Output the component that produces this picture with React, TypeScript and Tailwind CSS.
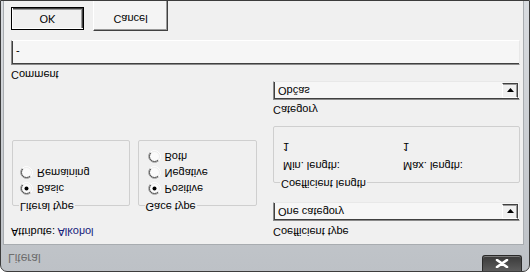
import React from "react";

function Radio({ checked }: { checked?: boolean }) {
  return (
    <svg width="13" height="13" viewBox="0 0 13 13" className="shrink-0">
      <circle cx="6.5" cy="6.5" r="5.5" fill="#fbfbfb" />
      <path d="M2.26 10.74 A6 6 0 0 1 10.74 2.26" stroke="#9a9a9a" fill="none" strokeWidth="1" />
      <path d="M10.74 2.26 A6 6 0 0 1 2.26 10.74" stroke="#ffffff" fill="none" strokeWidth="1" />
      <path d="M2.96 10.04 A5 5 0 0 1 10.04 2.96" stroke="#505050" fill="none" strokeWidth="1" />
      <path d="M10.04 2.96 A5 5 0 0 1 2.96 10.04" stroke="#ececec" fill="none" strokeWidth="1" />
      {checked && <circle cx="6.5" cy="6.5" r="2" fill="#000000" />}
    </svg>
  );
}

function RadioRow({ label, checked }: { label: string; checked?: boolean }) {
  return (
    <div className="flex items-center h-[16px] gap-[4px]">
      <Radio checked={checked} />
      <span className="leading-[13px]">{label}</span>
    </div>
  );
}

function Combo({ value }: { value: string }) {
  return (
    <div className="flex items-center justify-between h-[19px] w-[247px] bg-[#f6f6f6] border border-t-[#8a8a8a] border-l-[#8a8a8a] border-b-[#e8e8e8] border-r-[#e8e8e8] shadow-[inset_1px_1px_0_#404040] pl-[4px] pr-[1px]">
      <span className="leading-[13px]">{value}</span>
      <div className="flex items-center justify-center w-[16px] h-[15px] bg-[#f0f0f0] border border-t-white border-l-white border-b-[#404040] border-r-[#404040] shadow-[inset_-1px_-1px_0_#9a9a9a]">
        <svg width="7" height="4" viewBox="0 0 7 4">
          <path d="M0 0 H7 L3.5 4 Z" fill="#000" />
        </svg>
      </div>
    </div>
  );
}

function Group({
  label,
  className,
  children,
}: {
  label: string;
  className: string;
  children: React.ReactNode;
}) {
  return (
    <div className={`relative border border-[#cfcfcf] rounded-[2px] ${className}`}>
      <span className="absolute -top-[8px] left-[6px] bg-[#f0f0f0] px-[1px] leading-[13px]">{label}</span>
      {children}
    </div>
  );
}

export default function App() {
  return (
    <div className="w-[530px] h-[272px] overflow-hidden bg-white -scale-y-100 font-['Liberation_Sans',Arial,sans-serif] text-[11px] text-black">
      <div className="flex flex-col w-[530px] h-[272px] rounded-t-[7px] border border-[#3c3c3c] bg-gradient-to-b from-[#bdc1c6] to-[#d9dce0] overflow-hidden">
        {/* title bar */}
        <div className="flex justify-between h-[26px] shrink-0 pl-[7px] pr-[7px]">
          <span className="self-center text-[12px] leading-[14px] text-[#6e6e6e]">Literal</span>
          <div className="flex items-center justify-center w-[40px] h-[16px] rounded-b-[3px] border border-t-0 border-[#2a2a2a] bg-gradient-to-b from-[#5c5c5c] to-[#3a3a3a] shadow-[inset_0_-1px_0_#7a7a7a]">
            <svg width="14" height="9" viewBox="0 0 14 9">
              <path d="M2 1 L12 8 M12 1 L2 8" stroke="#ffffff" strokeWidth="2.6" strokeLinecap="round" />
            </svg>
          </div>
        </div>
        {/* client */}
        <div className="flex-1 ml-[2px] mr-[5px] bg-[#f0f0f0] border-t border-l border-r border-[#a8acb0] pl-[7px] pt-[6px] overflow-hidden">
          <div className="grid grid-cols-[246px_247px] gap-x-[16px]">
            <div className="flex flex-col">
              <div className="h-[13px] leading-[13px]">
                Attribute: <span className="text-[#14207a]">Alkohol</span>
              </div>
              <div className="flex gap-[8px] mt-[19px] ml-[1px]">
                <Group label="Literal type" className="w-[118px] h-[66px] pt-[8px] pl-[7px]">
                  <RadioRow label="Basic" checked />
                  <RadioRow label="Remaining" />
                </Group>
                <Group label="Gace type" className="w-[120px] h-[66px] pt-[8px] pl-[9px]">
                  <RadioRow label="Positive" checked />
                  <RadioRow label="Negative" />
                  <RadioRow label="Both" />
                </Group>
              </div>
            </div>
            <div className="flex flex-col">
              <div className="h-[13px] leading-[13px]">Coefficient type</div>
              <div className="mt-[4px]">
                <Combo value="One category" />
              </div>
              <Group label="Coefficient length" className="mt-[19px] h-[57px] pt-[10px] pl-[9px]">
                <div className="grid grid-cols-[120px_120px] gap-y-[6px] leading-[13px]">
                  <span>Min. length:</span>
                  <span>Max. length:</span>
                  <span>1</span>
                  <span>1</span>
                </div>
              </Group>
              <div className="mt-[10px] h-[13px] leading-[13px]">Category</div>
              <div className="mt-[3px]">
                <Combo value="Občas" />
              </div>
            </div>
          </div>
          <div className="h-[13px] leading-[13px]">Comment</div>
          <div className="mt-[3px] flex items-center w-[509px] h-[25px] bg-[#f6f6f6] border border-t-[#8a8a8a] border-l-[#8a8a8a] border-b-[#ffffff] border-r-[#e8e8e8] shadow-[inset_1px_1px_0_#404040] pl-[4px]">
            <span className="leading-[13px]">-</span>
          </div>
          <div className="mt-[9px] flex items-start gap-[9px]">
            <div className="mt-[1px] flex items-center justify-center w-[73px] h-[23px] border border-black bg-[#f0f0f0] shadow-[inset_1px_1px_0_#ffffff,inset_-1px_-1px_0_#404040,inset_-2px_-2px_0_#9a9a9a]">
              <span className="leading-[13px]">OK</span>
            </div>
            <div className="flex items-start justify-center pt-[5px] w-[75px] h-[32px] border border-b-0 border-t-[#404040] border-r-[#404040] border-l-white bg-[#f4f4f4] shadow-[inset_0_1px_0_#9a9a9a,inset_-1px_0_0_#9a9a9a]">
              <span className="leading-[13px]">Cancel</span>
            </div>
          </div>
        </div>
      </div>
    </div>
  );
}
